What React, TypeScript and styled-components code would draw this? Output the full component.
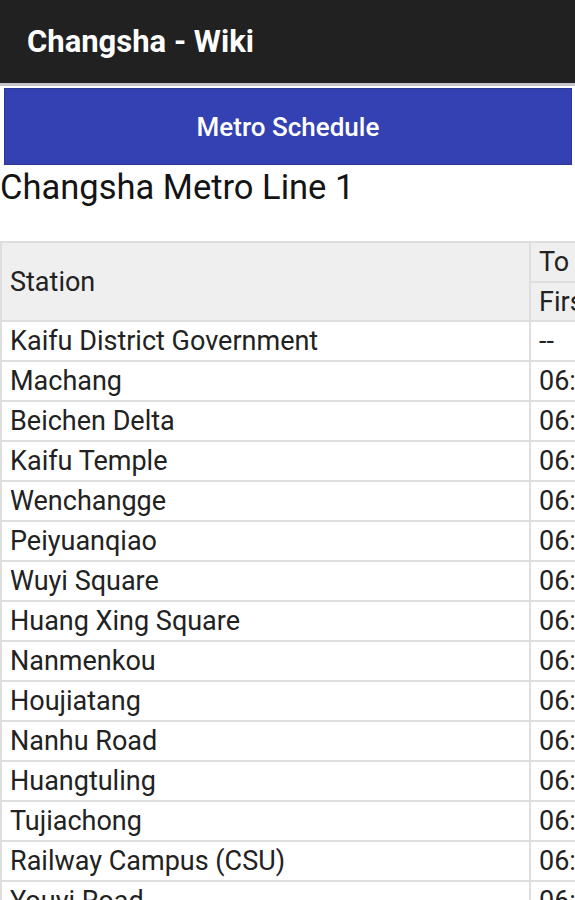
import React from "react";
import styled, { createGlobalStyle } from "styled-components";

const GlobalStyle = createGlobalStyle`
  html, body {
    margin: 0;
    padding: 0;
    background: #ffffff;
    overflow: hidden;
  }
  body {
    font-family: Roboto, "Liberation Sans", sans-serif;
    color: #212121;
  }
`;

const Page = styled.div`
  width: 575px;
  height: 900px;
  overflow: hidden;
  display: flex;
  flex-direction: column;
`;

const AppBar = styled.header`
  height: 83px;
  flex: none;
  background: #212121;
  border-bottom: 3px solid #c3c3cb;
  display: flex;
  align-items: center;
  padding-left: 27px;
`;

const AppTitle = styled.h1`
  margin: 0;
  font-size: 31px;
  font-weight: 700;
  color: #ffffff;
`;

const Content = styled.main`
  padding-top: 2px;
  display: flex;
  flex-direction: column;
`;

const ScheduleButton = styled.button`
  margin: 0 3px 0 4px;
  height: 77px;
  border: 1px solid #2c3694;
  border-radius: 0;
  background: #3441b2;
  color: #ffffff;
  font-family: Roboto, "Liberation Sans", sans-serif;
  font-size: 26px;
  font-weight: 500;
  display: flex;
  align-items: center;
  justify-content: center;
  padding: 0;
`;

const LineTitle = styled.h2`
  margin: 2px 0 0;
  font-size: 34.5px;
  font-weight: 400;
  line-height: 40px;
  color: #141414;
`;

const TableWrap = styled.div`
  margin-top: 34px;
  width: 575px;
  overflow: hidden;
`;

const Table = styled.table`
  border-collapse: collapse;
  table-layout: fixed;
  width: 929px;
  font-size: 27px;
  color: #222222;
  white-space: nowrap;
`;

const StationCol = styled.col`
  width: 529px;
`;

const TimeCol = styled.col`
  width: 200px;
`;

const HeadCell = styled.th<{ $tall?: boolean }>`
  border: 2px solid #dedede;
  background: #efefef;
  font-weight: 400;
  text-align: left;
  padding: 0 8px;
  height: ${(p) => (p.$tall ? "38px" : "37px")};
`;

const Cell = styled.td`
  border: 2px solid #dedede;
  padding: 0 8px;
  height: 38px;
`;

const stations: [string, string][] = [
  ["Kaifu District Government", "--"],
  ["Machang", "06:32"],
  ["Beichen Delta", "06:35"],
  ["Kaifu Temple", "06:37"],
  ["Wenchangge", "06:39"],
  ["Peiyuanqiao", "06:41"],
  ["Wuyi Square", "06:43"],
  ["Huang Xing Square", "06:45"],
  ["Nanmenkou", "06:47"],
  ["Houjiatang", "06:49"],
  ["Nanhu Road", "06:51"],
  ["Huangtuling", "06:53"],
  ["Tujiachong", "06:55"],
  ["Railway Campus (CSU)", "06:57"],
  ["Youyi Road", "06:59"],
];

export default function App() {
  return (
    <Page>
      <GlobalStyle />
      <AppBar>
        <AppTitle>Changsha - Wiki</AppTitle>
      </AppBar>
      <Content>
        <ScheduleButton>Metro Schedule</ScheduleButton>
        <LineTitle>Changsha Metro Line 1</LineTitle>
        <TableWrap>
          <Table>
            <colgroup>
              <StationCol />
              <TimeCol />
              <TimeCol />
            </colgroup>
            <thead>
              <tr>
                <HeadCell rowSpan={2}>Station</HeadCell>
                <HeadCell $tall colSpan={2}>
                  To Shangshuangtang
                </HeadCell>
              </tr>
              <tr>
                <HeadCell>First</HeadCell>
                <HeadCell>Last</HeadCell>
              </tr>
            </thead>
            <tbody>
              {stations.map(([name, time]) => (
                <tr key={name}>
                  <Cell>{name}</Cell>
                  <Cell>{time}</Cell>
                  <Cell>22:30</Cell>
                </tr>
              ))}
            </tbody>
          </Table>
        </TableWrap>
      </Content>
    </Page>
  );
}
